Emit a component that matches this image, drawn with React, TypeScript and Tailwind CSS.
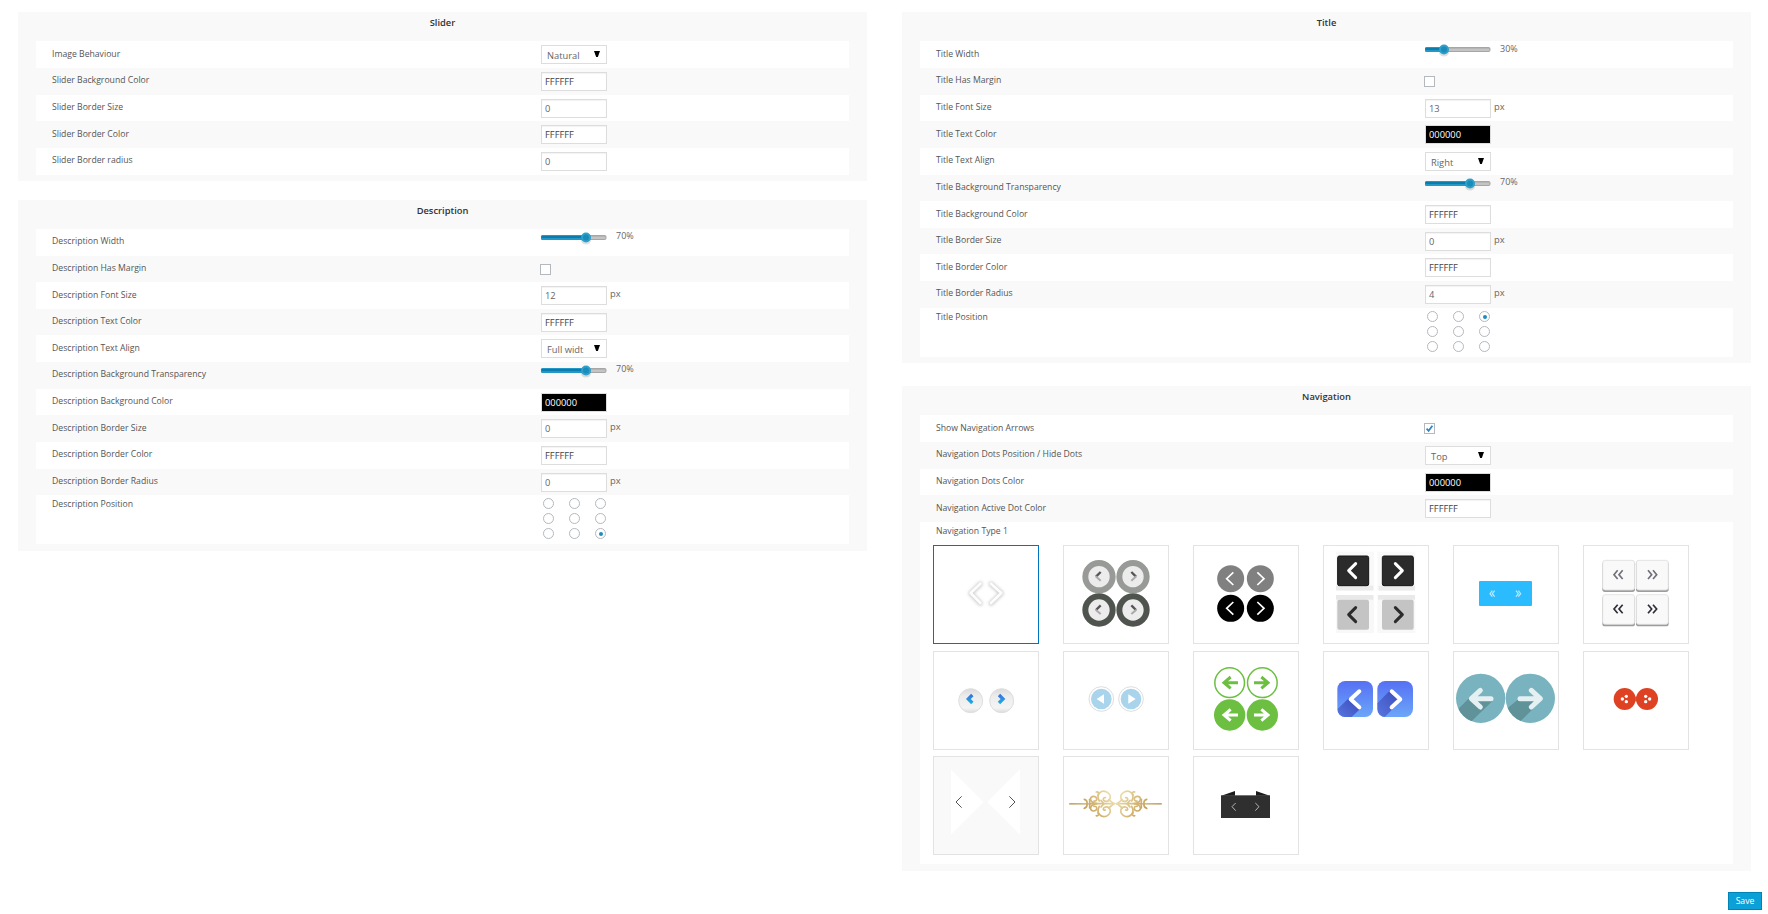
import type { ReactNode } from "react";

type Control =
  | { kind: "select"; value: string }
  | { kind: "color"; value: string }
  | { kind: "number"; value: string; unit?: boolean }
  | { kind: "slider"; value: number; low?: boolean }
  | { kind: "check"; checked: boolean }
  | { kind: "grid"; selected: number };

type RowData = { label: string; h: string; control: Control };

const H27 = "h-[27px] pt-[5px]";
const H27L = "h-[27px] pt-[6px]";
const H26 = "h-[26px] pt-[5px]";
const H49 = "h-[49px] pt-[2px]";

const sliderRows: RowData[] = [
  { label: "Image Behaviour", h: H27L, control: { kind: "select", value: "Natural" } },
  { label: "Slider Background Color", h: H27, control: { kind: "color", value: "FFFFFF" } },
  { label: "Slider Border Size", h: H26, control: { kind: "number", value: "0" } },
  { label: "Slider Border Color", h: H27L, control: { kind: "color", value: "FFFFFF" } },
  { label: "Slider Border radius", h: H27, control: { kind: "number", value: "0" } },
];

const descriptionRows: RowData[] = [
  { label: "Description Width", h: H27, control: { kind: "slider", value: 70 } },
  { label: "Description Has Margin", h: H26, control: { kind: "check", checked: false } },
  { label: "Description Font Size", h: H27L, control: { kind: "number", value: "12", unit: true } },
  { label: "Description Text Color", h: H26, control: { kind: "color", value: "FFFFFF" } },
  { label: "Description Text Align", h: H27L, control: { kind: "select", value: "Full widt" } },
  { label: "Description Background Transparency", h: H27, control: { kind: "slider", value: 70 } },
  { label: "Description Background Color", h: H26, control: { kind: "color", value: "000000" } },
  { label: "Description Border Size", h: H27L, control: { kind: "number", value: "0", unit: true } },
  { label: "Description Border Color", h: H27, control: { kind: "color", value: "FFFFFF" } },
  { label: "Description Border Radius", h: H26, control: { kind: "number", value: "0", unit: true } },
  { label: "Description Position", h: H49, control: { kind: "grid", selected: 8 } },
];

const titleRows: RowData[] = [
  { label: "Title Width", h: H27L, control: { kind: "slider", value: 30, low: true } },
  { label: "Title Has Margin", h: H27, control: { kind: "check", checked: false } },
  { label: "Title Font Size", h: H26, control: { kind: "number", value: "13", unit: true } },
  { label: "Title Text Color", h: H27L, control: { kind: "color", value: "000000" } },
  { label: "Title Text Align", h: H27, control: { kind: "select", value: "Right" } },
  { label: "Title Background Transparency", h: H26, control: { kind: "slider", value: 70 } },
  { label: "Title Background Color", h: H27L, control: { kind: "color", value: "FFFFFF" } },
  { label: "Title Border Size", h: H26, control: { kind: "number", value: "0", unit: true } },
  { label: "Title Border Color", h: H27L, control: { kind: "color", value: "FFFFFF" } },
  { label: "Title Border Radius", h: H27, control: { kind: "number", value: "4", unit: true } },
  { label: "Title Position", h: H49, control: { kind: "grid", selected: 2 } },
];

const navigationRows: RowData[] = [
  { label: "Show Navigation Arrows", h: H27L, control: { kind: "check", checked: true } },
  { label: "Navigation Dots Position / Hide Dots", h: H27, control: { kind: "select", value: "Top" } },
  { label: "Navigation Dots Color", h: H26, control: { kind: "color", value: "000000" } },
  { label: "Navigation Active Dot Color", h: H27L, control: { kind: "color", value: "FFFFFF" } },
];

const boxClass =
  "block h-[19px] w-[66px] border border-[#ddd] px-[3px] text-[9.33px] leading-[17px] shadow-[inset_0_1px_1px_rgba(0,0,0,0.05)] outline-none";

function ControlView({ control }: { control: Control }) {
  switch (control.kind) {
    case "select":
      return (
        <div className="mt-1 flex h-[19px] w-[66px] items-start justify-between border border-[#ddd] bg-white pl-[5px] pr-[6px] text-[9.33px] leading-[19px] text-[#666]">
          <span>{control.value}</span>
          <svg className="mt-[5px] h-[6px] w-[6px]" viewBox="0 0 6 6">
            <path d="M0 0H6L3.8 6H2.2Z" fill="#000" />
          </svg>
        </div>
      );
    case "color":
      return (
        <input
          className={`${boxClass} mt-1 ${control.value === "000000" ? "bg-black font-medium text-white" : "bg-white text-[#444]"}`}
          defaultValue={control.value}
        />
      );
    case "number":
      return (
        <div className="flex items-start">
          <input className={`${boxClass} mt-1 bg-white text-[#666]`} defaultValue={control.value} />
          {control.unit && <span className="ml-[3px] mt-[5px] text-[9.33px] leading-[14px] text-[#666]">px</span>}
        </div>
      );
    case "slider":
      return (
        <div className="flex items-start">
          <svg className="mt-px h-[18px] w-[66px] overflow-visible" viewBox="0 0 66 18">
            <rect x="0" y="5" width="65.500" height="5" rx="2" fill="#a6a6a6" />
            <rect x="1" y="6.500" width="63.500" height="2.500" rx="1" fill="#c4c4c4" />
            <rect x="0" y="5" width={control.value * 0.65} height="5" rx="1.500" fill="#2397c6" />
            <rect x="0.500" y="6" width={control.value * 0.65} height="2" fill="#0b7cab" />
            <ellipse cx={control.value * 0.65 - 0.5} cy="10.500" rx="5" ry="4" fill="#000" opacity="0.120" />
            <circle cx={control.value * 0.65 - 0.5} cy="7.500" r="5" fill="#2f9fcb" />
            <circle cx={control.value * 0.65 - 0.5} cy="7.500" r="3" fill="#1b8cb9" />
          </svg>
          <span className={`ml-[9px] text-[9px] leading-[14px] text-[#666] ${control.low ? "pt-px" : ""}`}>
            {control.value}%
          </span>
        </div>
      );
    case "check":
      return (
        <div className="-ml-px mt-2 flex h-[11px] w-[11px] items-center justify-center border border-[#b4b9be] bg-white">
          {control.checked && (
            <svg className="h-[9px] w-[9px]" viewBox="0 0 9 9">
              <path d="M1.600 4.600L3.600 6.800L7.400 1.800" fill="none" stroke="#2a86c8" strokeWidth="1.700" />
            </svg>
          )}
        </div>
      );
    case "grid":
      return (
        <div className="ml-0.5 mt-[3px] grid w-fit grid-cols-3 gap-x-[15px] gap-y-1">
          {Array.from({ length: 9 }, (_, i) => (
            <span
              key={i}
              className="flex h-[11px] w-[11px] items-center justify-center rounded-full border border-[#b4b9be] bg-white"
            >
              {i === control.selected && <span className="h-1 w-1 rounded-full bg-[#1e8cbe]" />}
            </span>
          ))}
        </div>
      );
  }
}

function Row({ row }: { row: RowData }) {
  const [height, labelTop] = row.h.split(" ");
  return (
    <div className={`flex items-start pl-4 odd:bg-white ${height}`}>
      <span className={`w-[489px] text-[8.67px] leading-[14px] text-[#555] ${labelTop}`}>{row.label}</span>
      <ControlView control={row.control} />
    </div>
  );
}

function Panel({ title, rows, pad, children }: { title: string; rows: RowData[]; pad: string; children?: ReactNode }) {
  return (
    <section className={`w-[849px] bg-[#f9f9f9] px-[18px] ${pad}`}>
      <h3 className="h-[29px] pt-[4px] text-center text-[9.33px] font-semibold leading-[14px] text-[#333]">{title}</h3>
      <div>
        {rows.map((row) => (
          <Row key={row.label} row={row} />
        ))}
      </div>
      {children}
    </section>
  );
}

function Pair({ left, right, color, width, cap }: { left: string; right: string; color: string; width: number; cap?: "round" }) {
  return (
    <g fill="none" stroke={color} strokeWidth={width} strokeLinecap={cap} strokeLinejoin={cap}>
      <path d={left} />
      <path d={right} />
    </g>
  );
}

const Thin = () => (
  <svg viewBox="39 30 318 297">
    <defs>
      <filter id="thin-glow" x="-40%" y="-40%" width="180%" height="180%">
        <feGaussianBlur stdDeviation="4" />
      </filter>
    </defs>
    <g filter="url(#thin-glow)">
      <Pair left="M181 147L152 175L181 205" right="M213 147L244 175L213 205" color="#cdcdcd" width={14} cap="round" />
    </g>
    <Pair left="M181 146L152 174L181 204" right="M213 146L244 174L213 204" color="#fdfdfd" width={8} cap="round" />
  </svg>
);

const Rings = () => (
  <svg viewBox="429 30 318 297">
    {[
      [125, "#989a97"],
      [225, "#50544f"],
    ].map(([y, c]) => (
      <g key={c}>
        {[537, 639].map((x) => (
          <circle key={x} cx={x} cy={y} r="41" fill="#ececec" stroke={c as string} strokeWidth="18" />
        ))}
        <g transform={`translate(0 ${Number(y) - 125})`}>
          <path d="M542 111L528 125" stroke="#555" strokeWidth="7" />
          <path d="M527 124L542 137" stroke="#aaa" strokeWidth="6" />
          <path d="M634 111L648 125" stroke="#555" strokeWidth="7" />
          <path d="M649 124L634 137" stroke="#aaa" strokeWidth="6" />
        </g>
      </g>
    ))}
  </svg>
);

const Discs = () => (
  <svg viewBox="819 30 318 297">
    {[
      [131, "#808080"],
      [220, "#000"],
    ].map(([y, c]) => (
      <g key={c} transform={`translate(0 ${y})`}>
        <circle cx="932" cy="0" r="40.500" fill={c as string} />
        <circle cx="1021" cy="0" r="40.500" fill={c as string} />
        <Pair left="M940 -19L920 0L940 19" right="M1012 -19L1032 0L1012 19" color="#fff" width={5} />
      </g>
    ))}
  </svg>
);

const Squares = () => (
  <svg viewBox="39 30 318 297">
    <rect x="78" y="50" width="114" height="118" fill="#f7f7f7" opacity="0.700" />
    <rect x="202" y="50" width="114" height="118" fill="#f7f7f7" opacity="0.700" />
    <rect x="78" y="152" width="112" height="14" fill="#ebebeb" />
    <rect x="206" y="152" width="109" height="14" fill="#ebebeb" />
    <rect x="78" y="180" width="114" height="114" fill="#f8f8f8" />
    <rect x="202" y="180" width="114" height="114" fill="#f8f8f8" />
    <rect x="78" y="180" width="112" height="14" fill="#e9e9e9" />
    <rect x="204" y="180" width="111" height="14" fill="#e9e9e9" />
    <rect x="83" y="63" width="93" height="89" rx="5" fill="#2b2b2b" stroke="#161616" strokeWidth="3" />
    <rect x="217" y="63" width="93" height="89" rx="5" fill="#2b2b2b" stroke="#161616" strokeWidth="3" />
    <rect x="82" y="194" width="95" height="90" rx="6" fill="#c4c4c4" />
    <rect x="216" y="194" width="95" height="90" rx="6" fill="#c4c4c4" />
    <Pair left="M137 86L116 107L137 128" right="M256 86L277 107L256 128" color="#fff" width={9} cap="round" />
    <Pair left="M137 218L116 239L137 260" right="M256 218L277 239L256 260" color="#2b2b2b" width={9} cap="round" />
  </svg>
);

const Cyan = () => (
  <svg viewBox="429 30 318 297">
    <rect x="507" y="138" width="81" height="75" rx="3" fill="#2bbcff" />
    <rect x="585" y="138" width="81" height="75" rx="3" fill="#2bbcff" />
    <Pair
      left="M547 167L540 176L547 185M554 167L547 176L554 185"
      right="M618 167L625 176L618 185M625 167L632 176L625 185"
      color="#c2ebff"
      width={3.4}
    />
  </svg>
);

const Keys = () => (
  <svg viewBox="819 30 318 297">
    {[
      [76, "#707078"],
      [179, "#2e2e36"],
    ].map(([y, c]) => (
      <g key={c} transform={`translate(0 ${y})`}>
        {[877, 978].map((x) => (
          <g key={x}>
            <rect x={x} y="4" width="98" height="91" rx="8" fill="#9c9c9c" />
            <rect x={x + 1} y="0" width="96" height="89" rx="8" fill="#f9f9fa" stroke="#dedede" strokeWidth="2.500" />
          </g>
        ))}
        <Pair
          left="M923 30L912 43L923 56M938 30L927 43L938 56"
          right="M1014 30L1025 43L1014 56M1029 30L1040 43L1029 56"
          color={c as string}
          width={5}
        />
      </g>
    ))}
  </svg>
);

const Pearls = () => (
  <svg viewBox="39 33 318 297">
    <defs>
      <linearGradient id="pearl" x1="0" y1="0" x2="0" y2="1">
        <stop offset="0" stopColor="#dadada" />
        <stop offset="0.300" stopColor="#ececec" />
        <stop offset="0.800" stopColor="#f4f4f4" />
        <stop offset="1" stopColor="#dcdcdc" />
      </linearGradient>
      <linearGradient id="pearl-arrow" gradientUnits="userSpaceOnUse" x1="0" y1="163" x2="0" y2="192">
        <stop offset="0" stopColor="#3b6fdb" />
        <stop offset="1" stopColor="#17b4e2" />
      </linearGradient>
    </defs>
    <circle cx="152" cy="182" r="36" fill="url(#pearl)" stroke="#dedede" strokeWidth="3" />
    <circle cx="245" cy="182" r="36" fill="url(#pearl)" stroke="#dedede" strokeWidth="3" />
    <Pair left="M157 165L145 177L157 189" right="M237 165L249 177L237 189" color="url(#pearl-arrow)" width={10} />
  </svg>
);

const Pale = () => (
  <svg viewBox="429 33 318 297">
    {[544, 633].map((x) => (
      <g key={x}>
        <circle cx={x} cy="177" r="37" fill="#fff" stroke="#dedede" strokeWidth="3" />
        <circle cx={x} cy="177" r="31" fill="#a9d4ec" />
      </g>
    ))}
    <path d="M530 177L552 163V191Z" fill="#fff" />
    <path d="M647 177L625 163V191Z" fill="#fff" />
  </svg>
);

const greenArrows = {
  left: "M954 0H912M932 -17L912 0L932 17",
  right: "M1002 0H1044M1024 -17L1044 0L1024 17",
};

const Green = () => (
  <svg viewBox="819 33 318 297">
    <circle cx="929" cy="128" r="44.500" fill="#fff" stroke="#6cbf40" strokeWidth="4.500" />
    <circle cx="1027" cy="128" r="44.500" fill="#fff" stroke="#6cbf40" strokeWidth="4.500" />
    <circle cx="929" cy="225" r="47" fill="#6cbf40" />
    <circle cx="1027" cy="225" r="47" fill="#6cbf40" />
    <g transform="translate(0 128)">
      <Pair left={greenArrows.left} right={greenArrows.right} color="#6cbf40" width={9} />
    </g>
    <g transform="translate(0 225)">
      <Pair left={greenArrows.left} right={greenArrows.right} color="#fff" width={9} />
    </g>
  </svg>
);

const BlueApps = () => (
  <svg viewBox="39 33 318 297">
    <defs>
      <linearGradient id="app" x1="0" y1="0" x2="0" y2="1">
        <stop offset="0" stopColor="#5670f4" />
        <stop offset="1" stopColor="#6ba6f8" />
      </linearGradient>
      <linearGradient id="app-shade" x1="1" y1="0" x2="0" y2="1">
        <stop offset="0" stopColor="#3b49b8" />
        <stop offset="1" stopColor="#5676e0" />
      </linearGradient>
      <clipPath id="app-clip">
        <rect x="82" y="123" width="107" height="108" rx="24" />
        <rect x="202" y="123" width="107" height="108" rx="24" />
      </clipPath>
    </defs>
    <rect x="82" y="123" width="107" height="108" rx="24" fill="url(#app)" />
    <rect x="202" y="123" width="107" height="108" rx="24" fill="url(#app)" />
    <g clipPath="url(#app-clip)" fill="url(#app-shade)">
      <path d="M117 174L82 208V231H125L151 206Z" />
      <path d="M241 150L202 190V231H224L278 178Z" />
    </g>
    <Pair left="M148 154L122 178L148 202" right="M245 154L271 178L245 202" color="#fff" width={12} cap="round" />
  </svg>
);

const Teal = () => (
  <svg viewBox="429 33 318 297">
    <defs>
      <clipPath id="teal-clip">
        <circle cx="512" cy="175" r="74" />
        <circle cx="661" cy="175" r="74" />
      </clipPath>
    </defs>
    <circle cx="512" cy="175" r="74" fill="#79b3bf" />
    <circle cx="661" cy="175" r="74" fill="#79b3bf" />
    <g clipPath="url(#teal-clip)" fill="#5f9299">
      <path d="M477 175L430 222V260H468L548 182Z" />
      <path d="M625 178L587 209V260H615L698 178Z" />
    </g>
    <Pair
      left="M543 176H486M511 151L484 176L511 201"
      right="M630 176H687M664 151L691 176L664 201"
      color="#e4f0f2"
      width={15}
      cap="round"
    />
  </svg>
);

const Red = () => (
  <svg viewBox="819 33 318 297">
    <path d="M960 170H995V184H960Z" fill="#e8694c" />
    <circle cx="944" cy="177" r="33" fill="#de4223" />
    <circle cx="1011" cy="177" r="33" fill="#de4223" />
    {[
      [937, 177],
      [949, 169],
      [949, 185],
      [1019, 177],
      [1007, 169],
      [1007, 185],
    ].map(([x, y]) => (
      <circle key={`${x}-${y}`} cx={x} cy={y} r="5" fill="#fff" />
    ))}
  </svg>
);

const Triangles = () => (
  <svg viewBox="39 33 318 297">
    <rect x="42" y="36" width="312" height="291" fill="#f9f9f9" />
    <path d="M93 73L191 171L93 269Z" fill="#fff" />
    <path d="M300 73L202 171L300 269Z" fill="#fff" />
    <Pair left="M125 154L108 171L125 188" right="M268 154L285 171L268 188" color="#555" width={3} />
  </svg>
);

const ornament = (
  <g fill="none" stroke="url(#gold)" strokeWidth="5" strokeLinecap="round">
    <path d="M449 176.500H512" strokeWidth="4" />
    <path d="M493 163Q503 166 501 176Q503 186 493 190" />
    <path d="M509 163V189" />
    <path d="M512 176H584" />
    <path d="M530 176C506 172 508 153 522 154C534 156 532 170 522 168" />
    <path d="M530 176C506 180 508 199 522 198C534 196 532 182 522 184" />
    <path d="M538 168C526 146 545 134 560 141C578 151 571 171 556 169C547 166 549 156 556 158" />
    <path d="M538 184C526 206 545 219 560 213C578 203 571 184 556 186C547 189 549 197 556 195" />
    <path d="M529 141C534 139 538 144 534 150" />
    <path d="M529 212C534 214 538 209 534 203" />
    <path d="M566 164L582 176L566 189" />
    <path d="M543 166L552 176L543 186" />
  </g>
);

const Gold = () => (
  <svg viewBox="429 33 318 297">
    <defs>
      <linearGradient id="gold" gradientUnits="userSpaceOnUse" x1="460" y1="215" x2="575" y2="145">
        <stop offset="0" stopColor="#a5803a" />
        <stop offset="0.500" stopColor="#d0b06c" />
        <stop offset="1" stopColor="#eee0b0" />
      </linearGradient>
    </defs>
    {ornament}
    <g transform="matrix(-1 0 0 1 1173 0)">{ornament}</g>
  </svg>
);

const DarkBox = () => (
  <svg viewBox="819 33 318 297">
    <path d="M904 152L945 138V152Z" fill="#1c1c1c" />
    <path d="M1049 152L1008 138V152Z" fill="#1c1c1c" />
    <rect x="903" y="151" width="147" height="68" fill="#2f2f2f" />
    <Pair left="M947 174L936 185L947 197" right="M1006 174L1017 185L1006 197" color="#b5b5b5" width={3} />
  </svg>
);

const tiles = [Thin, Rings, Discs, Squares, Cyan, Keys, Pearls, Pale, Green, BlueApps, Teal, Red, Triangles, Gold, DarkBox];

function ArrowTiles() {
  return (
    <div className="h-[342px] bg-white pl-[13px]">
      <div className="h-[23px] pl-[3px] pt-[2px] text-[8.67px] leading-[14px] text-[#555]">Navigation Type 1</div>
      <div className="grid grid-cols-[repeat(6,106px)] gap-x-6 gap-y-[6.500px]">
        {tiles.map((Art, i) => (
          <div
            key={i}
            className={`h-[99px] w-[106px] border [&>svg]:-m-px [&>svg]:h-[99px] [&>svg]:w-[106px] ${
              i === 0 ? "border-[#0074be]" : "border-[#e3e3e3]"
            }`}
          >
            <Art />
          </div>
        ))}
      </div>
    </div>
  );
}

export default function App() {
  return (
    <main className="h-[914px] w-[1768px] overflow-hidden bg-white font-['Open_Sans',sans-serif]">
      <div className="flex h-[880px] items-start gap-[35px] pl-[18px] pt-3">
        <div className="flex flex-col gap-[19px]">
          <Panel title="Slider" rows={sliderRows} pad="pb-[6px]" />
          <Panel title="Description" rows={descriptionRows} pad="pb-[7px]" />
        </div>
        <div className="flex flex-col gap-[23px]">
          <Panel title="Title" rows={titleRows} pad="pb-[6px]" />
          <Panel title="Navigation" rows={navigationRows} pad="pb-[7px]">
            <ArrowTiles />
          </Panel>
        </div>
      </div>
      <div className="flex justify-end pr-[6px] pt-3">
        <button className="h-[18px] w-[34px] border border-[#0083b5] bg-[#0ba0d8] text-[8.67px] leading-[16px] text-white">
          Save
        </button>
      </div>
    </main>
  );
}
